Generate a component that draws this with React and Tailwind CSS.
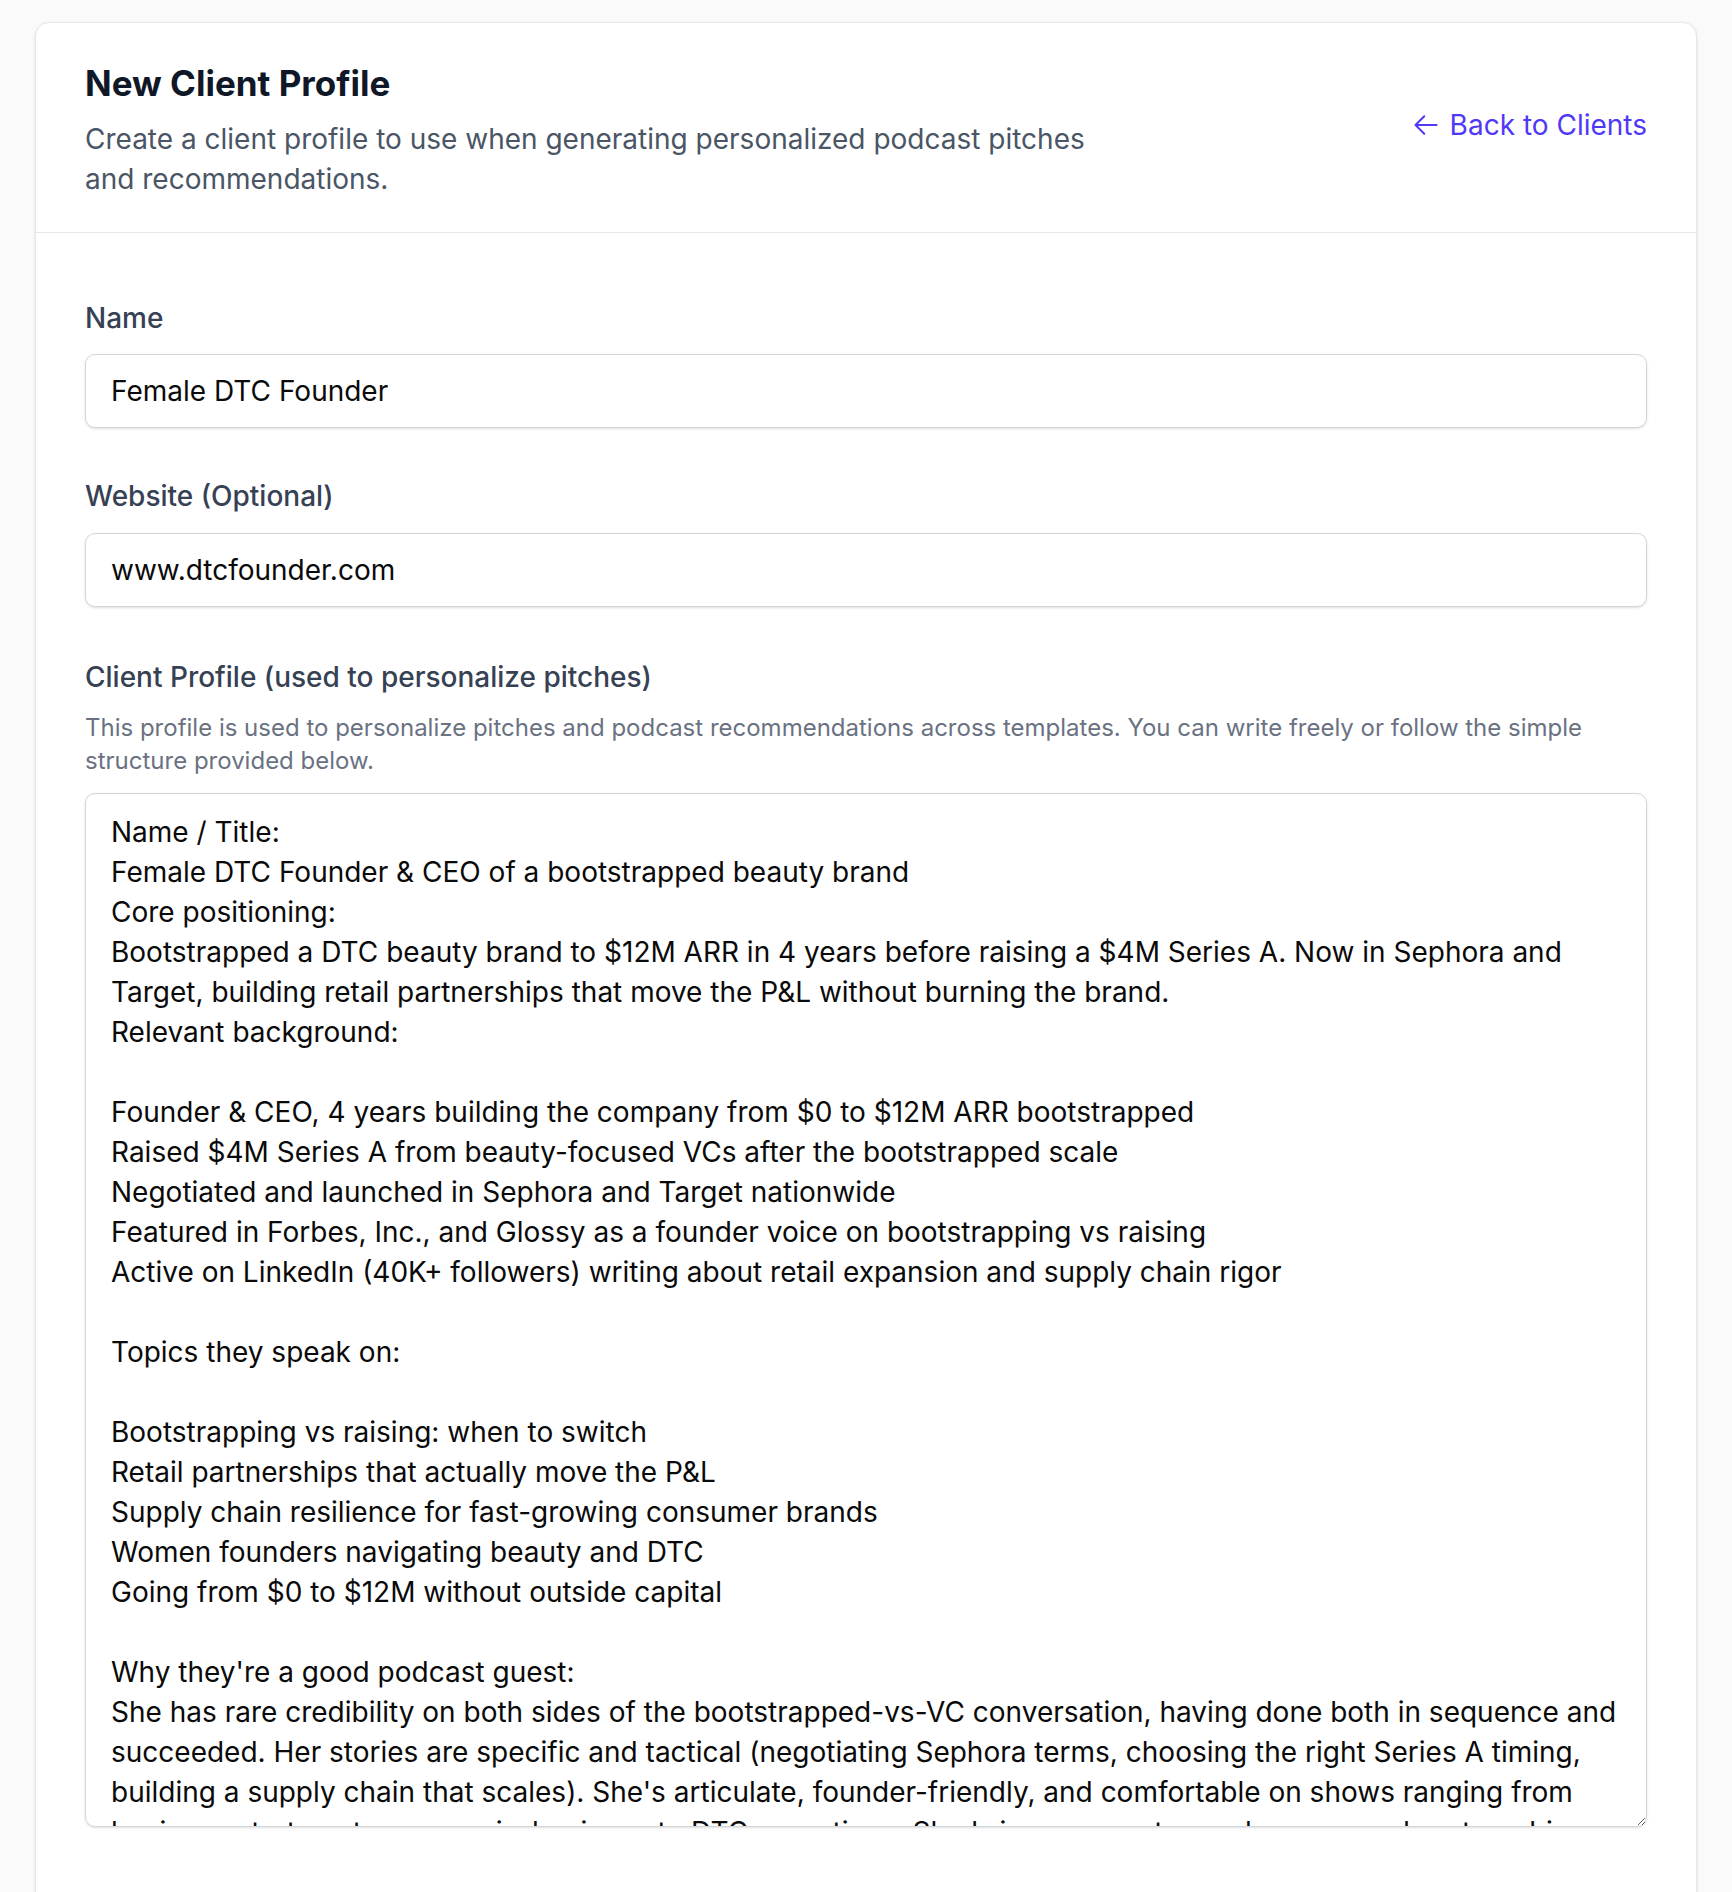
import React, { useState } from 'react';

const PROFILE_TEMPLATE = `Name / Title:
Female DTC Founder & CEO of a bootstrapped beauty brand
Core positioning:
Bootstrapped a DTC beauty brand to $12M ARR in 4 years before raising a $4M Series A. Now in Sephora and
Target, building retail partnerships that move the P&L without burning the brand.
Relevant background:

Founder & CEO, 4 years building the company from $0 to $12M ARR bootstrapped
Raised $4M Series A from beauty-focused VCs after the bootstrapped scale
Negotiated and launched in Sephora and Target nationwide
Featured in Forbes, Inc., and Glossy as a founder voice on bootstrapping vs raising
Active on LinkedIn (40K+ followers) writing about retail expansion and supply chain rigor

Topics they speak on:

Bootstrapping vs raising: when to switch
Retail partnerships that actually move the P&L
Supply chain resilience for fast-growing consumer brands
Women founders navigating beauty and DTC
Going from $0 to $12M without outside capital

Why they're a good podcast guest:
She has rare credibility on both sides of the bootstrapped-vs-VC conversation, having done both in sequence and
succeeded. Her stories are specific and tactical (negotiating Sephora terms, choosing the right Series A timing,
building a supply chain that scales). She's articulate, founder-friendly, and comfortable on shows ranging from
business strategy to women-in-business to DTC operations. She brings concrete numbers, named partnerships
and real lessons learned.`;

const ArrowLeft = () => (
  <svg width="28" height="28" viewBox="0 0 24 24" fill="none" stroke="currentColor" strokeWidth="1.75" strokeLinecap="round" strokeLinejoin="round">
    <path d="M10.5 19.5 3 12m0 0 7.5-7.5M3 12h18" />
  </svg>
);

const NewClientProfile = () => {
  const [name, setName] = useState('Female DTC Founder');
  const [website, setWebsite] = useState('www.dtcfounder.com');
  const [profile, setProfile] = useState(PROFILE_TEMPLATE);

  return (
    <div className="min-h-screen bg-[#fafafa] px-[35px] pt-[22px] font-[Inter,sans-serif]">
      <div className="rounded-[14px] border border-gray-200 bg-white shadow-sm">
        {/* header */}
        <div className="flex items-start justify-between border-b border-gray-200 px-[49px] pt-[40px] pb-[33px]">
          <div className="max-w-[1030px]">
            <h1 className="text-[35px] leading-[41px] font-bold text-gray-900">New Client Profile</h1>
            <p className="mt-[15px] text-[28px] leading-[40px] text-gray-600">
              Create a client profile to use when generating personalized podcast pitches and recommendations.
            </p>
          </div>
          <a href="#" className="mt-[42px] flex items-center gap-[10px] text-[28px] leading-[40px] text-indigo-600 hover:text-indigo-700">
            <ArrowLeft />
            Back to Clients
          </a>
        </div>

        {/* form */}
        <form className="px-[49px] pt-[65px] pb-[120px]" onSubmit={(e) => e.preventDefault()}>
          <div>
            <label className="block text-[28px] leading-[40px] font-medium text-gray-700">Name</label>
            <input
              type="text"
              value={name}
              onChange={(e) => setName(e.target.value)}
              className="mt-[16px] block w-full rounded-[10px] border border-gray-300 px-[25px] py-[16px] text-[28px] leading-[40px] text-[#0a0a0a] shadow-sm outline-none"
            />
          </div>

          <div className="mt-[48px]">
            <label className="block text-[28px] leading-[40px] font-medium text-gray-700">Website (Optional)</label>
            <input
              type="text"
              value={website}
              onChange={(e) => setWebsite(e.target.value)}
              className="mt-[17px] block w-full rounded-[10px] border border-gray-300 px-[25px] py-[16px] text-[28px] leading-[40px] text-[#0a0a0a] shadow-sm outline-none"
            />
          </div>

          <div className="mt-[50px]">
            <label className="block text-[28px] leading-[40px] font-medium text-gray-700">
              Client Profile (used to personalize pitches)
            </label>
            <p className="mt-[14px] text-[24px] leading-[33px] text-gray-500">
              This profile is used to personalize pitches and podcast recommendations across templates. You can write freely or follow the simple structure provided below.
            </p>
            <textarea
              value={profile}
              onChange={(e) => setProfile(e.target.value)}
              wrap="off"
              spellCheck={false}
              className="mt-[16px] block h-[1034px] w-full resize-y overflow-hidden whitespace-pre rounded-[10px] border border-gray-300 px-[25px] pt-[18px] pb-[16px] text-[28px] leading-[40px] text-[#0a0a0a] shadow-sm outline-none"
            />
          </div>
        </form>
      </div>
    </div>
  );
};

export default function App() {
  return <NewClientProfile />;
}
